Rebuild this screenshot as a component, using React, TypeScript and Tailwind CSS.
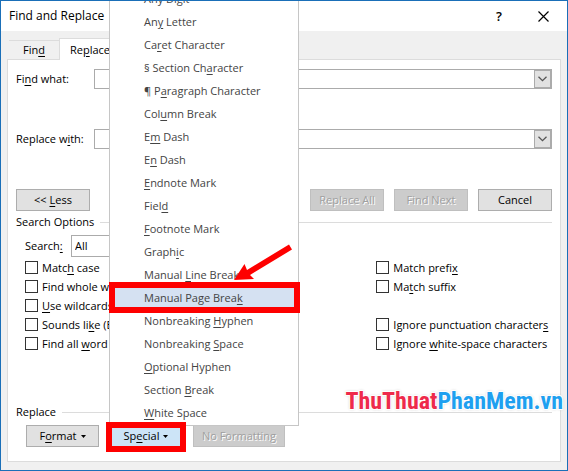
import type { ReactNode } from "react";

// "&" marks the access key, e.g. "Fi&nd what:" underlines the n
function Label({ text }: { text: string }) {
  const at = text.indexOf("&");
  if (at < 0) return <>{text}</>;
  return (
    <>
      {text.slice(0, at)}
      <span className="underline underline-offset-2">{text[at + 1]}</span>
      {text.slice(at + 2)}
    </>
  );
}

const specialItems = [
  "Any Di&git",
  "An&y Letter",
  "Ca&ret Character",
  "§ Section Ch&aracter",
  "¶ P&aragraph Character",
  "Col&umn Break",
  "E&m Dash",
  "E&n Dash",
  "&Endnote Mark",
  "Fiel&d",
  "&Footnote Mark",
  "Graph&ic",
  "Manual &Line Break",
  "Manual Page Brea&k",
  "Nonbreaking &Hyphen",
  "Nonbreaking &Space",
  "&Optional Hyphen",
  "Section &Break",
  "&White Space",
];

const leftOptions = [
  "Matc&h case",
  "Find whole words onl&y",
  "&Use wildcards",
  "Sounds li&ke (English)",
  "Find all &word forms (English)",
];

const rightOptions = [
  "Match prefi&x",
  "Ma&tch suffix",
  null,
  "Ignore punctuation character&s",
  "Ignore &white-space characters",
];

interface DialogButtonProps {
  children: ReactNode;
  className?: string;
  disabled?: boolean;
}

function DialogButton({ children, className = "w-[74px]", disabled }: DialogButtonProps) {
  return (
    <button
      type="button"
      disabled={disabled}
      className={`flex h-[22px] shrink-0 items-center justify-center gap-1 border whitespace-nowrap ${className} ${
        disabled
          ? "border-[#bfbfbf] bg-[#cccccc] text-[#a0a0a0] [text-shadow:1px_1px_0_#fff]"
          : "border-[#adadad] bg-[#e1e1e1]"
      }`}
    >
      {children}
    </button>
  );
}

function Caret() {
  return (
    <svg width="5" height="3" viewBox="0 0 5 3" aria-hidden="true">
      <path d="M0 0h5L2.500 3z" fill="currentColor" />
    </svg>
  );
}

function ComboField({ id, label }: { id: string; label: string }) {
  return (
    <div className="flex h-5 items-center">
      <label htmlFor={id} className="w-[78px] shrink-0 whitespace-nowrap">
        <Label text={label} />
      </label>
      <div className="flex h-5 min-w-0 flex-1 border border-[#ababab] bg-white">
        <input id={id} type="text" className="min-w-0 flex-1 px-1 outline-none" />
        <button
          type="button"
          aria-label="Show history"
          className="flex w-[17px] items-center justify-center border border-[#ababab] bg-[#e1e1e1]"
        >
          <svg width="9" height="6" viewBox="0 0 9 6" fill="none" aria-hidden="true">
            <path d="M0.500 0.800 4.500 4.600 8.500 0.800" stroke="#555" strokeWidth="1.300" />
          </svg>
        </button>
      </div>
    </div>
  );
}

function Option({ text }: { text: string }) {
  return (
    <label className="flex h-[19px] items-center gap-1 whitespace-nowrap">
      <input
        type="checkbox"
        className="size-[13px] shrink-0 appearance-none border border-[#333] bg-white checked:bg-[#333]"
      />
      <span>
        <Label text={text} />
      </span>
    </label>
  );
}

function SectionTitle({ children }: { children: ReactNode }) {
  return (
    <div className="flex h-4 items-center gap-1.5">
      <h2 className="whitespace-nowrap">{children}</h2>
      <div className="h-px flex-1 bg-[#dcdcdc]" />
    </div>
  );
}

function SpecialMenu() {
  return (
    <ul
      role="menu"
      className="absolute top-0 bottom-11 left-[108px] flex w-[190px] flex-col justify-end overflow-hidden border-x border-b border-[#c6c6c6] bg-white pb-px text-[#444]"
    >
      {specialItems.map((item) => {
        const active = item === "Manual Page Brea&k";
        return (
          <li key={item} role="none" className="shrink-0">
            <button
              type="button"
              role="menuitem"
              className={`flex h-[23px] w-full items-center pl-[34px] text-left ${active ? "bg-[#d5e1f2]" : ""}`}
            >
              <span>
                <Label text={item} />
              </span>
            </button>
          </li>
        );
      })}
    </ul>
  );
}

export default function App() {
  return (
    <div className="relative border border-[#1a6fb8] bg-[#f0f0f0] font-['Open_Sans','Noto_Sans',sans-serif] text-[11px] leading-4 text-black">
      <header className="flex h-[30px] items-center bg-white pr-4 pl-2">
        <h1 className="flex-1 text-[12px]">Find and Replace</h1>
        <button type="button" aria-label="Help" className="w-5 text-center text-[13px] font-semibold">
          ?
        </button>
        <button type="button" aria-label="Close" className="ml-[26px] flex w-4 justify-center">
          <svg width="11" height="11" viewBox="0 0 11 11" aria-hidden="true">
            <path d="M0.500 0.500 10.500 10.500M10.500 0.500 0.500 10.500" stroke="#000" strokeWidth="1.200" />
          </svg>
        </button>
      </header>

      <div className="px-1.5 pt-[7px] pb-2">
        <div role="tablist" className="-mb-px flex items-end pl-0.5">
          <button
            type="button"
            role="tab"
            aria-selected="false"
            className="h-5 w-[50px] border-t border-b border-[#dcdcdc]"
          >
            <Label text="Fin&d" />
          </button>
          <button
            type="button"
            role="tab"
            aria-selected="true"
            className="h-[22px] w-[70px] border border-b-0 border-[#dcdcdc] bg-white pl-2.5 text-left"
          >
            <Label text="Re&place" />
          </button>
        </div>

        <main className="border border-[#dcdcdc] bg-white pt-[9px] pr-2 pb-3.5 pl-2">
          <div className="flex flex-col gap-10">
            <ComboField id="find-what" label="Fi&nd what:" />
            <ComboField id="replace-with" label="Replace w&ith:" />
          </div>

          <div className="mt-10 flex gap-2.5">
            <DialogButton>
              <span>
                <Label text="<< &Less" />
              </span>
            </DialogButton>
            <div className="flex-1" />
            <DialogButton disabled>Replace All</DialogButton>
            <DialogButton disabled>Find Next</DialogButton>
            <DialogButton>Cancel</DialogButton>
          </div>

          <section className="mt-[3px]">
            <SectionTitle>Search Options</SectionTitle>
            <div className="mt-[5px] flex items-center pl-[9px]">
              <label htmlFor="direction" className="w-[46px]">
                <Label text="Search&:" />
              </label>
              <select
                id="direction"
                className="h-[22px] w-20 appearance-none border border-[#ababab] bg-white pl-[3px]"
              >
                <option>All</option>
                <option>Down</option>
                <option>Up</option>
              </select>
            </div>
            <div className="mt-px grid grid-cols-3 pl-[9px]">
              <div>
                {leftOptions.map((text) => (
                  <Option key={text} text={text} />
                ))}
              </div>
              <div className="col-start-3">
                {rightOptions.map((text, i) =>
                  text ? <Option key={text} text={text} /> : <div key={i} className="h-[19px]" />
                )}
              </div>
            </div>
          </section>

          <section className="mt-[51px]">
            <SectionTitle>Replace</SectionTitle>
            <div className="mt-[5px] flex pl-2.5">
              <DialogButton className="w-[73px]">
                <span>
                  <Label text="F&ormat" />
                </span>
                <Caret />
              </DialogButton>
              <button
                type="button"
                className="mx-[13px] flex h-[22px] w-[68px] items-center justify-center gap-1 bg-[#cce4f7]"
              >
                <span>
                  <Label text="Sp&ecial" />
                </span>
                <Caret />
              </button>
              <DialogButton disabled className="w-[92px]">
                No Formatting
              </DialogButton>
            </div>
          </section>
        </main>
      </div>

      <SpecialMenu />

      {/* highlight frames */}
      <div className="pointer-events-none absolute bottom-[157px] left-[108px] h-[31px] w-[191px] border-[6px] border-[#fe0000]" />
      <div className="pointer-events-none absolute bottom-[18px] left-[105px] h-[30px] w-20 border-[6px] border-[#fe0000]" />
      <svg
        className="pointer-events-none absolute bottom-[189px] left-[233px]"
        width="59"
        height="37"
        viewBox="0 0 59 37"
        aria-hidden="true"
      >
        <path d="M0 36 10.500 20 13 26 55 0.500 58 5.500 16 31 20 35z" fill="#fe0000" />
      </svg>

      <div className="absolute right-1 bottom-[55px] font-['Roboto_Condensed','Roboto',sans-serif] text-[24px] leading-7 font-bold text-[#ee2a4b] [text-shadow:1px_1px_1px_#fff,-1px_-1px_1px_#fff,1px_-1px_1px_#fff,-1px_1px_1px_#fff,0_0_3px_#999]">
        ThuThuat<span className="text-[#1ea0f0]">PhanMem.vn</span>
      </div>
    </div>
  );
}
